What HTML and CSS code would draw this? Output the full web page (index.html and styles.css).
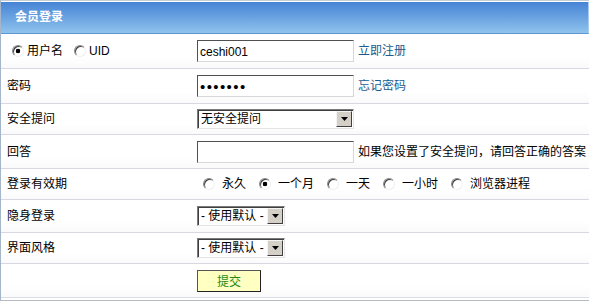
FILE: index.html
```html
<!DOCTYPE html>
<html lang="zh-CN">
<head>
  <meta charset="UTF-8">
  <title>会员登录</title>
  <link rel="stylesheet" href="styles.css">
</head>
<body>

  <form class="box" method="post" action="#">
    <div class="head">会员登录</div>

    <div class="row r1">
      <div class="label">
        <label class="opt tight"><input type="radio" name="loginfield" checked>用户名</label>
        <label class="opt tight"><input type="radio" name="loginfield">UID</label>
      </div>
      <div class="field">
        <input class="text" type="text" name="username" value="ceshi001">
        <a class="link" href="#">立即注册</a>
      </div>
    </div>

    <div class="row r2">
      <div class="label">密码</div>
      <div class="field">
        <input class="text pass" type="password" name="password" value="1234567">
        <a class="link" href="#">忘记密码</a>
      </div>
    </div>

    <div class="row r3">
      <div class="label">安全提问</div>
      <div class="field">
        <span class="select wide">
          <select name="questionid">
            <option>无安全提问</option>
          </select>
          <span class="arrow"><svg width="7" height="4" viewBox="0 0 7 4"><path d="M0 0h7L3.5 4z" fill="#000"/></svg></span>
        </span>
      </div>
    </div>

    <div class="row r4">
      <div class="label">回答</div>
      <div class="field">
        <input class="text" type="text" name="answer">
        <span class="note">如果您设置了安全提问，请回答正确的答案</span>
      </div>
    </div>

    <div class="row r5">
      <div class="label">登录有效期</div>
      <div class="field radios">
        <label class="opt"><input type="radio" name="cookietime">永久</label>
        <label class="opt"><input type="radio" name="cookietime" checked>一个月</label>
        <label class="opt"><input type="radio" name="cookietime">一天</label>
        <label class="opt"><input type="radio" name="cookietime">一小时</label>
        <label class="opt"><input type="radio" name="cookietime">浏览器进程</label>
      </div>
    </div>

    <div class="row r6">
      <div class="label">隐身登录</div>
      <div class="field">
        <span class="select">
          <select name="loginmode">
            <option>- 使用默认 -</option>
          </select>
          <span class="arrow"><svg width="7" height="4" viewBox="0 0 7 4"><path d="M0 0h7L3.5 4z" fill="#000"/></svg></span>
        </span>
      </div>
    </div>

    <div class="row r7">
      <div class="label">界面风格</div>
      <div class="field">
        <span class="select">
          <select name="styleid">
            <option>- 使用默认 -</option>
          </select>
          <span class="arrow"><svg width="7" height="4" viewBox="0 0 7 4"><path d="M0 0h7L3.5 4z" fill="#000"/></svg></span>
        </span>
      </div>
    </div>

    <div class="row r8">
      <div class="label"></div>
      <div class="field">
        <button type="submit">提交</button>
      </div>
    </div>
  </form>

</body>
</html>
```

FILE: styles.css
```css
body {
  margin: 0;
  background-color: white;
  font-family: "Liberation Sans", "Noto Sans CJK SC", sans-serif;
  font-size: 12px;
  color: #000;
}

.box {
  width: 588px;
  border-top: 1px solid #c4ccd6;
  border-left: 1px solid #a6b6ca;
  border-bottom: 1px solid #b6bac2;
  padding-bottom: 2px;
}

.head {
  height: 31px;
  margin-top: 1px;
  padding-left: 14px;
  line-height: 31px;
  color: white;
  font-weight: bold;
  background: linear-gradient(#4683d5, #6ea6e2 55%, #8fc4ec);
  border-bottom: 1px solid #5f96d2;
  border-right: 1px solid #a9cbee;
}

.row {
  display: grid;
  grid-template-columns: 196px 1fr;
  align-items: center;
  box-sizing: border-box;
  border-bottom: 1px solid #d8d8e4;
  background: linear-gradient(#fff 65%, #fafafa);
}

.r1 { height: 35px; }
.r2 { height: 35px; }
.r3 { height: 31px; }
.r4 { height: 34px; }
.r5 { height: 31px; }
.r6 { height: 33px; }
.r7 { height: 31px; }
.r8 { height: 34px; border-bottom-color: #dcdce6; }

.label {
  padding-left: 6px;
  display: flex;
  align-items: center;
  line-height: 16px;
}

.field {
  display: flex;
  align-items: center;
  line-height: 16px;
}

.text {
  box-sizing: border-box;
  width: 157px;
  height: 22px;
  margin: 0;
  padding: 2px 2px 0;
  font-family: "Liberation Sans", "Noto Sans CJK SC", sans-serif;
  font-size: 12px;
  border: 1px solid;
  border-color: #505050 #d8d8d8 #d8d8d8 #505050;
  outline: none;
}

.pass {
  padding: 0 2px;
  font-size: 15px;
  letter-spacing: 1.4px;
}

.link {
  margin-left: 4px;
  color: #1b5b8d;
  text-decoration: none;
}

.note {
  margin-left: 4px;
}

/* radios */
.opt {
  display: inline-flex;
  align-items: center;
}

.opt input {
  appearance: none;
  box-sizing: border-box;
  width: 12px;
  height: 12px;
  margin: 0 7px 0 0;
  border-radius: 50%;
  border: 1px solid;
  border-color: #8a8a8a #f0f0f0 #f0f0f0 #8a8a8a;
  box-shadow: inset 1px 1px 0 #404040;
  background: white;
}

.opt input:checked {
  background: radial-gradient(circle, #000 0 2px, #fff 2.6px);
}

.tight input {
  margin: 0 3px 0 5px;
}

.tight + .tight input {
  margin-left: 11px;
}

.radios {
  padding-left: 6px;
}

.radios .opt {
  margin-right: 13px;
}

/* selects */
.select {
  display: inline-flex;
  align-items: center;
  box-sizing: border-box;
  height: 20px;
  padding: 1px;
  background: white;
  border: 1px solid;
  border-color: #7a7a7a #e4e4e4 #e4e4e4 #7a7a7a;
  box-shadow: inset 1px 1px 0 #404040;
}

.select select {
  appearance: none;
  flex: 1;
  min-width: 0;
  height: 16px;
  margin: 0;
  padding: 0 0 0 2px;
  border: none;
  background: transparent;
  font-family: "Liberation Sans", "Noto Sans CJK SC", sans-serif;
  font-size: 12px;
  line-height: 16px;
  outline: none;
}

.select.wide { width: 157px; }
.select { width: 88px; }

.arrow {
  display: flex;
  align-items: center;
  justify-content: center;
  box-sizing: border-box;
  width: 16px;
  height: 16px;
  background: #d4d0c8;
  border: 1px solid;
  border-color: #f4f4f4 #404040 #404040 #f4f4f4;
}

button {
  box-sizing: border-box;
  width: 64px;
  height: 22px;
  margin: 0;
  padding: 0;
  background-color: #ffffc2;
  color: #1d8a1d;
  font-family: "Liberation Sans", "Noto Sans CJK SC", sans-serif;
  font-size: 12px;
  border: 1px solid;
  border-color: #555 #222 #222 #555;
  cursor: pointer;
}
```
